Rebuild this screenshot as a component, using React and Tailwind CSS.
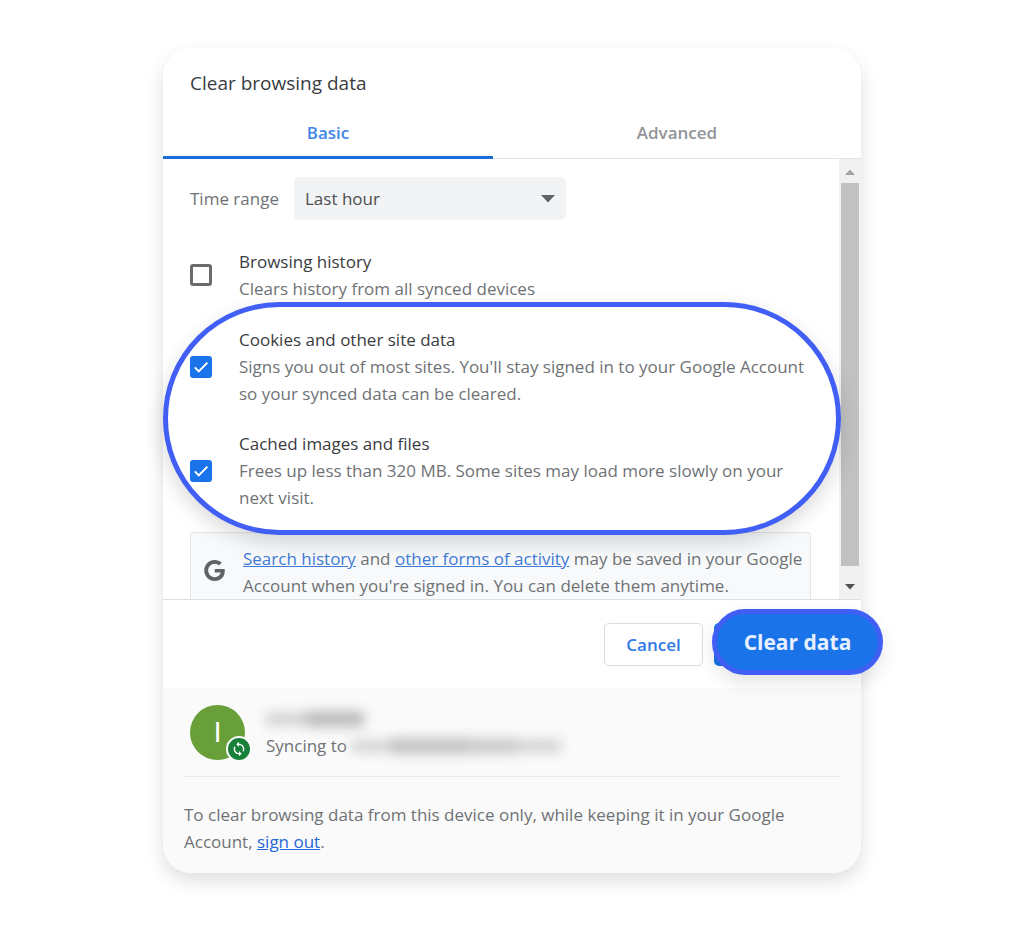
import { useState } from 'react';

const options = [
  {
    id: 'cookies',
    title: 'Cookies and other site data',
    detail: "Signs you out of most sites. You'll stay signed in to your Google Account so your synced data can be cleared.",
  },
  {
    id: 'cache',
    title: 'Cached images and files',
    detail: 'Frees up less than 320 MB. Some sites may load more slowly on your next visit.',
  },
];

function DataOption({ id, title, detail, checked, onChange }) {
  return (
    <div className="relative flex items-center">
      <span className="relative flex shrink-0 w-[22px] h-[22px] mr-[27px]">
        <input
          id={id}
          type="checkbox"
          checked={checked}
          onChange={onChange}
          className="w-full h-full appearance-none rounded-[3px] border-[3px] border-[#6a6d6f] checked:border-[#1a73e8] checked:bg-[#1a73e8]"
        />
        {checked && (
          <svg viewBox="0 0 22 22" className="absolute inset-0 pointer-events-none" fill="none" stroke="#fff" strokeWidth="2">
            <path d="M4.8 11.4l4 4L17.4 6.6" />
          </svg>
        )}
      </span>
      <label htmlFor={id} className="flex-1 text-[#6f7275]">
        <span className="block text-[#3a3c3f]">{title}</span>
        {detail}
      </label>
    </div>
  );
}

function Scrollbar() {
  return (
    <div className="flex flex-col items-center w-[22px] shrink-0 bg-[#f1f1f1]">
      <svg viewBox="0 0 22 24" className="w-[22px] h-6" fill="#a3a3a3">
        <path d="M11 10.5l5 5.5H6z" />
      </svg>
      <div className="flex-1 w-[18px] bg-[#c1c1c1]" />
      <svg viewBox="0 0 22 33" className="w-[22px] h-[33px]" fill="#505050">
        <path d="M11 23.5l5-5.5H6z" />
      </svg>
    </div>
  );
}

export default function App() {
  const [range, setRange] = useState('Last hour');
  const [selected, setSelected] = useState({ history: false, cookies: true, cache: true });

  const toggle = (id) => setSelected(prev => ({ ...prev, [id]: !prev[id] }));

  return (
    <main className="min-h-screen bg-white pt-12 pb-14 px-4 font-['Open_Sans','Noto_Sans',sans-serif] text-[17px] leading-[27px] text-[#6f7275]">
      <section className="mx-auto max-w-[698px] rounded-[28px] bg-white shadow-[0_8px_18px_rgba(0,0,0,0.13)]">
        <h1 className="px-[27px] pt-5 pb-3 text-[19px] leading-[30px] text-[#3a3c3f]">Clear browsing data</h1>

        <div role="tablist" className="flex border-b border-[#e4e4e4] font-semibold">
          <button role="tab" aria-selected="true" className="w-[330px] h-[49px] pb-0.5 -mb-px border-b-[3px] border-[#1f6bdc] text-[#4285ea]">
            Basic
          </button>
          <button role="tab" aria-selected="false" className="flex-1 h-[49px] pb-0.5 -mb-px border-b-[3px] border-transparent text-[#929597]">
            Advanced
          </button>
        </div>

        <div className="flex">
          <div className="flex-1 pl-[27px] pt-[18px]">
            <div className="flex items-center">
              <label htmlFor="range" className="w-[104px]">Time range</label>
              <div className="relative">
                <select
                  id="range"
                  value={range}
                  onChange={(e) => setRange(e.target.value)}
                  className="w-[272px] h-[43px] pl-[11px] appearance-none rounded-[5px] bg-[#f1f3f4] text-[#4b4e51]"
                >
                  <option>Last hour</option>
                  <option>Last 24 hours</option>
                  <option>All time</option>
                </select>
                <svg viewBox="0 0 14 8" className="absolute right-[11px] top-[18px] w-[14px] h-2 pointer-events-none" fill="#5f6368">
                  <path d="M0 0h14L7 7.5z" />
                </svg>
              </div>
            </div>

            <div className="mt-[28px]">
              <DataOption
                id="history"
                title="Browsing history"
                detail="Clears history from all synced devices"
                checked={selected.history}
                onChange={() => toggle('history')}
              />
            </div>

            {/* highlighted options */}
            <div className="relative flex flex-col gap-[23px] pt-6 pb-[21px] pr-[26px]">
              <div className="absolute top-0 -bottom-[3px] -left-[27px] -right-[2px] rounded-full border-[5px] border-[#415ff5] bg-white shadow-[0_8px_20px_rgba(0,0,0,0.15)]" />
              {options.map((option) => (
                <DataOption
                  key={option.id}
                  {...option}
                  checked={selected[option.id]}
                  onChange={() => toggle(option.id)}
                />
              ))}
            </div>

            <div className="flex items-center mr-[28px] pl-[13px] pt-3 rounded-t-[4px] border border-b-0 border-[#e3e5e8] bg-[#f8f9fa]">
              <svg viewBox="0 0 24 24" className="w-[21px] h-[21px] shrink-0 mb-1 mr-[18px]" fill="#5f6368">
                <path d="M12.24 10.285V14.4h6.806c-.275 1.765-2.056 5.174-6.806 5.174-4.095 0-7.439-3.389-7.439-7.574s3.345-7.574 7.439-7.574c2.33 0 3.891.989 4.785 1.849l3.254-3.138C18.189 1.186 15.479 0 12.24 0c-6.635 0-12 5.365-12 12s5.365 12 12 12c6.926 0 11.52-4.869 11.52-11.726 0-.788-.085-1.39-.189-1.989H12.24z" />
              </svg>
              <p>
                <a href="#history" className="text-[#3f7bd5] underline">Search history</a> and{' '}
                <a href="#activity" className="text-[#3f7bd5] underline">other forms of activity</a> may be saved in your Google Account when you're signed in. You can delete them anytime.
              </p>
            </div>
          </div>
          <Scrollbar />
        </div>

        <div className="flex justify-end items-start h-[89px] border-t border-[#dddfe2] pt-[9px]">
          <button className="w-[99px] h-[43px] mt-3.5 mr-[9px] rounded-[5px] border border-[#dadce0] font-semibold text-[#2f7ae6]">
            Cancel
          </button>
          <div className="relative -mr-[22px]">
            <span className="absolute left-0.5 top-3.5 w-32 h-[43px] rounded-[5px] bg-[#1a73e8]" />
            <button className="relative w-[171px] h-[66px] rounded-full border-[5px] border-[#415ff5] bg-[#1a73e8] text-[21px] font-bold text-[#e6f0ff] shadow-[0_8px_18px_rgba(0,0,0,0.1)]">
              Clear data
            </button>
          </div>
        </div>

        <footer className="rounded-b-[28px] bg-[#fafafa] px-[21px] pb-[18px]">
          <div className="flex items-center h-[89px] pl-1.5 border-b border-[#ebebeb]">
            <div className="relative flex items-center justify-center w-[55px] h-[55px] mr-[21px] rounded-full bg-[#689f38] font-['Roboto',sans-serif] text-[28px] text-white">
              I
              <span className="absolute -right-[7px] -bottom-[2px] flex items-center justify-center w-[26px] h-[26px] rounded-full border-2 border-[#fafafa] bg-[#188038]">
                <svg viewBox="0 0 24 24" className="w-4 h-4" fill="#fff">
                  <path d="M12 4V1L8 5l4 4V6c3.31 0 6 2.69 6 6 0 1.01-.25 1.97-.7 2.8l1.46 1.46C19.54 15.03 20 13.57 20 12c0-4.42-3.58-8-8-8zm0 14c-3.31 0-6-2.69-6-6 0-1.01.25-1.97.7-2.8L5.24 7.74C4.46 8.97 4 10.43 4 12c0 4.42 3.58 8 8 8v3l4-4-4-4v3z" />
                </svg>
              </span>
            </div>
            <div>
              <div className="flex items-center h-[27px] blur-[6px]">
                <span className="w-10 h-3 bg-[#cfcfcf]" />
                <span className="w-[58px] h-4 bg-[#bcbcbc]" />
              </div>
              <div className="flex items-center gap-1">
                Syncing to
                <div className="flex items-center blur-[6px]">
                  <span className="w-10 h-3 bg-[#d2d2d2]" />
                  <span className="w-[76px] h-4 bg-[#c2c2c2]" />
                  <span className="w-[50px] h-4 bg-[#cbcbcb]" />
                  <span className="w-11 h-3 bg-[#d0d0d0]" />
                </div>
              </div>
            </div>
          </div>
          <p className="pt-6 pr-8">
            To clear browsing data from this device only, while keeping it in your Google Account,{' '}
            <a href="#signout" className="text-[#2568d8] underline">sign out</a>.
          </p>
        </footer>
      </section>
    </main>
  );
}
